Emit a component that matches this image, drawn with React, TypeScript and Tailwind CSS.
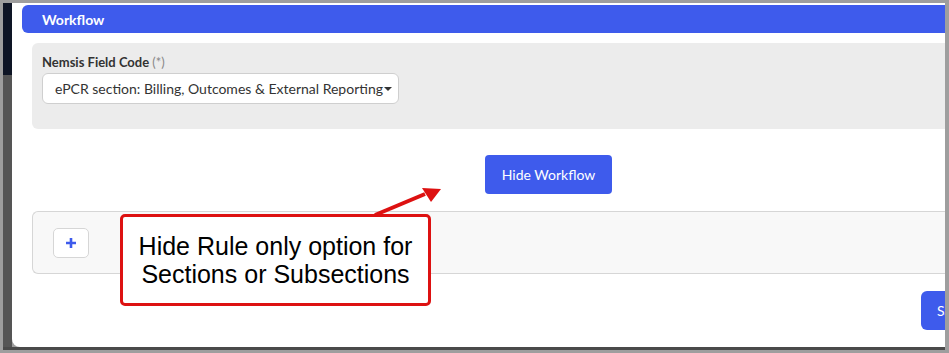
const App = () => {
  return (
    <div className="relative w-[949px] h-[353px] bg-[#9e9e9e] pt-[3px] pb-[3px] pl-[3px] pr-[4px] overflow-hidden font-['Lato',sans-serif]">
      <div className="flex h-full flex-col">
        <div className="flex flex-1 min-h-0">
          {/* backdrop strip */}
          <div className="flex w-[9px] flex-col">
            <div className="h-[72px] bg-[#0e1525]" />
            <div className="flex-1 bg-[#555555]" />
          </div>

          {/* Modal */}
          <div className="flex-1 overflow-hidden rounded-bl-[8px] bg-white pt-[2px]">
            {/* Header */}
            <div className="ml-[10px] flex h-[28px] items-center rounded-l-[6px] bg-[#3e5bec] pl-[20px] text-[14px] font-bold text-white">
              Workflow
            </div>

            {/* Field panel */}
            <div className="ml-[20px] mt-[10px] h-[86px] rounded-l-[6px] bg-[#ececec] px-[10px] pt-[11px]">
              <div className="text-[13px] leading-[16px] font-bold text-[#333]">
                Nemsis Field Code <span className="font-normal text-[#888]">(*)</span>
              </div>
              <div className="mt-[3px] flex h-[31px] w-[357px] items-center rounded-[6px] border border-[#cfcfcf] bg-white pl-[12px] text-[14px] text-[#333]">
                <span>ePCR section: Billing, Outcomes &amp; External Reporting</span>
                <span className="ml-[1px] inline-block h-0 w-0 border-x-[4px] border-t-[4px] border-x-transparent border-t-[#333]" />
              </div>
            </div>

            {/* Hide Workflow */}
            <div className="mt-[26px] pl-[473px]">
              <button className="h-[39px] w-[127px] rounded-[4px] bg-[#3e5bec] text-[14px] text-white">
                Hide Workflow
              </button>
            </div>

            {/* Rules panel */}
            <div className="ml-[20px] mt-[17px] h-[63px] rounded-l-[6px] border-y border-l border-[#d6d6d6] bg-[#f8f8f8] pl-[20px] pt-[16px]">
              <button className="flex h-[30px] w-[36px] items-center justify-center rounded-[5px] border border-[#d6d6d6] bg-white">
                <svg width="12" height="12" viewBox="0 0 12 12">
                  <path d="M6 1v10M1 6h10" stroke="#3e5bec" strokeWidth="2.6" />
                </svg>
              </button>
            </div>

            {/* Save */}
            <div className="mt-[17px] pl-[909px]">
              <button className="h-[39px] w-[60px] rounded-[6px] bg-[#3e5bec] pl-[16px] text-left text-[14px] text-white">
                Save
              </button>
            </div>
          </div>
        </div>
        <div className="h-[3px] bg-[#4a4a4a]" />
      </div>

      {/* Callout */}
      <div className="absolute left-[120px] top-[214px] flex h-[92px] w-[311px] items-center justify-center rounded-[5px] border-[3px] border-[#dd1111] bg-white text-center font-['Liberation_Sans',Arial,sans-serif] text-[25px] leading-[28px] text-black">
        <div>
          Hide Rule only option for
          <br />
          Sections or Subsections
        </div>
      </div>

      {/* Arrow */}
      <svg className="absolute left-[360px] top-[175px]" width="90" height="50" viewBox="0 0 90 50">
        <line x1="15" y1="40" x2="65" y2="19" stroke="#dd1111" strokeWidth="4" />
        <polygon points="81,14 62,13 71,27" fill="#dd1111" />
      </svg>
    </div>
  );
};

export default App;
